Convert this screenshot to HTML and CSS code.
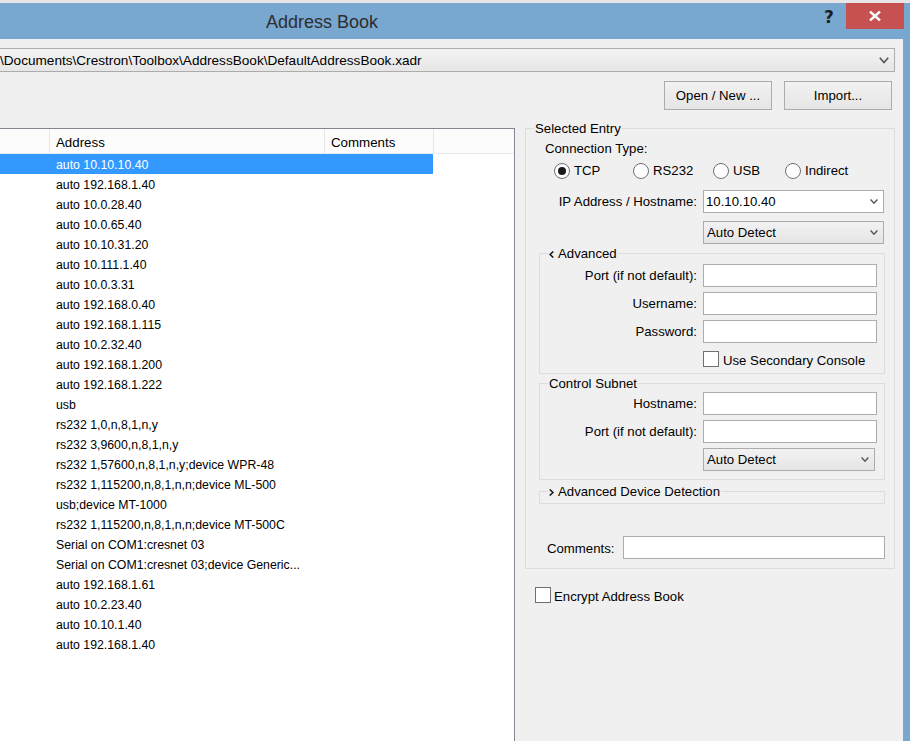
FILE: index.html
```html
<!DOCTYPE html>
<html>
<head>
<meta charset="utf-8">
<title>Address Book</title>
<link rel="stylesheet" href="styles.css">
</head>
<body>
<div class="strip"></div>
<div class="titlebar">
  <div class="title">Address Book</div>
  <div class="spacer"></div>
  <div class="help">?</div>
  <div class="close"><svg width="12" height="10" viewBox="0 0 12 10"><path d="M1 0.5 L11 9.5 M11 0.5 L1 9.5" stroke="#fff" stroke-width="2.4" fill="none"/></svg></div>
</div>
<div class="window">
  <div class="content">
    <div class="pathcombo">
      <span>\Documents\Crestron\Toolbox\AddressBook\DefaultAddressBook.xadr</span>
      <svg class="chev-big" width="10" height="7" viewBox="0 0 10 7"><path d="M0.8 0.8 L5 5.6 L9.2 0.8" fill="none" stroke="#555" stroke-width="1.6"/></svg>
    </div>
    <div class="buttons">
      <button class="btn">Open / New ...</button>
      <button class="btn">Import...</button>
    </div>
    <div class="main">
      <div class="list">
        <div class="lhead">
          <div class="hc c1"></div>
          <div class="hc c2">Address</div>
          <div class="hc c3">Comments</div>
        </div>
        <div class="row sel">auto 10.10.10.40</div>
        <div class="row">auto 192.168.1.40</div>
        <div class="row">auto 10.0.28.40</div>
        <div class="row">auto 10.0.65.40</div>
        <div class="row">auto 10.10.31.20</div>
        <div class="row">auto 10.111.1.40</div>
        <div class="row">auto 10.0.3.31</div>
        <div class="row">auto 192.168.0.40</div>
        <div class="row">auto 192.168.1.115</div>
        <div class="row">auto 10.2.32.40</div>
        <div class="row">auto 192.168.1.200</div>
        <div class="row">auto 192.168.1.222</div>
        <div class="row">usb</div>
        <div class="row">rs232 1,0,n,8,1,n,y</div>
        <div class="row">rs232 3,9600,n,8,1,n,y</div>
        <div class="row">rs232 1,57600,n,8,1,n,y;device WPR-48</div>
        <div class="row">rs232 1,115200,n,8,1,n,n;device ML-500</div>
        <div class="row">usb;device MT-1000</div>
        <div class="row">rs232 1,115200,n,8,1,n,n;device MT-500C</div>
        <div class="row">Serial on COM1:cresnet 03</div>
        <div class="row">Serial on COM1:cresnet 03;device Generic...</div>
        <div class="row">auto 192.168.1.61</div>
        <div class="row">auto 10.2.23.40</div>
        <div class="row">auto 10.10.1.40</div>
        <div class="row">auto 192.168.1.40</div>
      </div>
      <div class="side">
        <fieldset class="group entry">
          <legend>Selected Entry</legend>
          <div class="ctype">Connection Type:</div>
          <div class="radios">
            <div class="radio r1"><span class="rb on"></span>TCP</div>
            <div class="radio r2"><span class="rb"></span>RS232</div>
            <div class="radio r3"><span class="rb"></span>USB</div>
            <div class="radio r4"><span class="rb"></span>Indirect</div>
          </div>
          <div class="frow ip">
            <div class="lbl lbl-entry">IP Address / Hostname:</div>
            <div class="cb white w181"><span>10.10.10.40</span><svg width="8" height="5" viewBox="0 0 8 5"><path d="M0.6 0.6 L4 4.2 L7.4 0.6" fill="none" stroke="#555" stroke-width="1.4"/></svg></div>
          </div>
          <div class="cb w181 auto1"><span>Auto Detect</span><svg width="8" height="5" viewBox="0 0 8 5"><path d="M0.6 0.6 L4 4.2 L7.4 0.6" fill="none" stroke="#555" stroke-width="1.4"/></svg></div>

          <fieldset class="group sub adv">
            <legend><svg class="lchev" width="5" height="7" viewBox="0 0 5 7"><path d="M4.3 0.5 L1 3.5 L4.3 6.5" fill="none" stroke="#111" stroke-width="1.5"/></svg>Advanced</legend>
            <div class="frow first2">
              <div class="lbl lbl-sub">Port (if not default):</div>
              <div class="tb w174"></div>
            </div>
            <div class="frow gap5">
              <div class="lbl lbl-sub">Username:</div>
              <div class="tb w174"></div>
            </div>
            <div class="frow gap5">
              <div class="lbl lbl-sub">Password:</div>
              <div class="tb w174"></div>
            </div>
            <div class="check sec"><span class="cbox"></span><span class="ct">Use Secondary Console</span></div>
          </fieldset>

          <fieldset class="group sub csub">
            <legend>Control Subnet</legend>
            <div class="frow">
              <div class="lbl lbl-sub">Hostname:</div>
              <div class="tb w174"></div>
            </div>
            <div class="frow gap5">
              <div class="lbl lbl-sub">Port (if not default):</div>
              <div class="tb w174"></div>
            </div>
            <div class="cb w172 auto2"><span>Auto Detect</span><svg width="8" height="5" viewBox="0 0 8 5"><path d="M0.6 0.6 L4 4.2 L7.4 0.6" fill="none" stroke="#555" stroke-width="1.4"/></svg></div>
          </fieldset>

          <fieldset class="group sub add">
            <legend><svg class="lchev" width="5" height="7" viewBox="0 0 5 7"><path d="M0.7 0.5 L4 3.5 L0.7 6.5" fill="none" stroke="#111" stroke-width="1.5"/></svg>Advanced Device Detection</legend>
            <div class="add-pad"></div>
          </fieldset>

          <div class="comments">
            <div class="clbl">Comments:</div>
            <div class="tb cfield"></div>
          </div>
        </fieldset>
        <div class="check encrypt"><span class="cbox"></span><span class="ct">Encrypt Address Book</span></div>
      </div>
    </div>
  </div>
  <div class="frame"></div>
</div>
</body>
</html>
```

FILE: styles.css
```css
html, body {
  margin: 0;
  padding: 0;
}
body {
  width: 910px;
  height: 741px;
  overflow: hidden;
  background: #78A7CF;
  font-family: "Liberation Sans", Arial, sans-serif;
  color: #000;
}

.strip {
  height: 3px;
  background: #E6E6E6;
}

.titlebar {
  height: 36px;
  display: flex;
  align-items: flex-start;
  background: #78A7CF;
}
.title {
  margin-left: 266px;
  padding-top: 1px;
  line-height: 36px;
  font-size: 18px;
  color: #2E2E2E;
}
.spacer { flex: 1; }
.help {
  margin-top: 4px;
  margin-right: 11px;
  width: 11px;
  font-family: "DejaVu Sans", sans-serif;
  font-weight: bold;
  font-size: 17px;
  line-height: 20px;
  color: #1E1E1E;
}
.close {
  width: 58px;
  height: 26px;
  margin-right: 6px;
  background: #C75050;
  display: flex;
  align-items: center;
  justify-content: center;
}

.window {
  display: flex;
  height: 702px;
}
.content {
  width: 903px;
  background: #F0F0F0;
  display: flex;
  flex-direction: column;
}
.frame {
  flex: 1;
  background: #78A7CF;
}

.pathcombo {
  margin: 9px 8px 0 -4px;
  height: 24px;
  box-sizing: border-box;
  border: 1px solid #ACACAC;
  background: linear-gradient(#F3F3F3, #E6E6E6);
  display: flex;
  align-items: center;
  justify-content: space-between;
  padding: 0 5px 0 3px;
  font-size: 13.6px;
}

.buttons {
  display: flex;
  justify-content: flex-end;
  gap: 12px;
  margin: 9px 11px 0 0;
}
.btn {
  width: 108px;
  height: 29px;
  box-sizing: border-box;
  border: 1px solid #ACACAC;
  background: linear-gradient(#F2F2F2, #E5E5E5);
  font-family: "Liberation Sans", Arial, sans-serif;
  font-size: 13.2px;
  color: #000;
  padding: 0;
  margin: 0;
}

.main {
  display: flex;
  flex: 1;
  min-height: 0;
  margin-top: 10px;
}

.list {
  width: 515px;
  box-sizing: border-box;
  margin-top: 8px;
  border-top: 1px solid #828790;
  border-right: 1px solid #828790;
  background: #fff;
}
.lhead {
  display: flex;
  height: 24px;
  border-bottom: 1px solid #E5EBF2;
  background: #FCFCFC;
}
.hc {
  box-sizing: border-box;
  border-right: 1px solid #E5E5E5;
  padding: 2px 0 0 6px;
  font-size: 13.3px;
  line-height: 23px;
}
.c1 { width: 50px; }
.c2 { width: 275px; }
.c3 { width: 109px; }
.row {
  width: 433px;
  box-sizing: border-box;
  height: 20px;
  line-height: 22px;
  padding-left: 56px;
  font-size: 12.3px;
  white-space: nowrap;
  overflow: hidden;
}
.row.sel {
  background: #3399FF;
  color: #fff;
}

.side {
  margin-left: 10px;
  width: 370px;
  font-size: 13.2px;
}
fieldset.group {
  margin: 0;
  padding: 0;
  border: 1px solid #DCDCDC;
  min-width: 0;
}
fieldset.group > legend {
  padding: 1px 1px 0;
  margin-left: 8px;
  line-height: 16px;
  font-size: 13.2px;
}
.lchev {
  margin-right: 4px;
  vertical-align: 0;
}
.entry {
  padding-bottom: 9px !important;
}
.ctype {
  margin: 4px 0 0 19px;
  line-height: 16px;
}
.radios {
  display: flex;
  height: 16px;
  margin: 6px 0 0 28px;
}
.radio {
  display: flex;
  align-items: center;
  gap: 4px;
  line-height: 18px;
}
.r1 { width: 79px; }
.r2 { width: 80px; }
.r3 { width: 72px; }
.rb {
  width: 16px;
  height: 16px;
  box-sizing: border-box;
  border: 1px solid #707070;
  border-radius: 50%;
  background: #fff;
  display: flex;
  align-items: center;
  justify-content: center;
}
.rb.on::after {
  content: "";
  width: 8px;
  height: 8px;
  border-radius: 50%;
  background: #1A1A1A;
}

.frow {
  display: flex;
  align-items: center;
  height: 23px;
}
.ip { margin-top: 11px; }
.lbl {
  box-sizing: border-box;
  text-align: right;
  padding-right: 6px;
  white-space: nowrap;
}
.lbl-entry { width: 177px; }
.lbl-sub { width: 163px; }
.first2 { margin-top: 2px; }
.gap5 { margin-top: 5px; }

.tb {
  height: 23px;
  box-sizing: border-box;
  border: 1px solid #ABADB3;
  background: #fff;
}
.w174 { width: 174px; }
.cb {
  height: 23px;
  box-sizing: border-box;
  border: 1px solid #ACACAC;
  background: linear-gradient(#F2F2F2, #E5E5E5);
  display: flex;
  align-items: center;
  justify-content: space-between;
  padding: 0 5px 0 3px;
}
.cb.white {
  background: #fff;
  padding-left: 2px;
}
.w181 { width: 181px; }
.w172 { width: 172px; }
.auto1 {
  margin: 8px 0 0 177px;
}
.auto2 {
  margin: 5px 0 0 163px;
}

fieldset.sub {
  margin: 1px 9px 0 13px;
}
.adv { padding-bottom: 4px !important; }
.csub { padding-bottom: 8px !important; }
fieldset.add { margin-top: 3px; }
.add-pad { height: 3px; }

.check {
  display: flex;
  align-items: flex-start;
  line-height: 16px;
  white-space: nowrap;
}
.check .ct {
  padding-top: 2px;
}
.cbox {
  width: 16px;
  height: 16px;
  box-sizing: border-box;
  border: 1px solid #707070;
  background: #fff;
}
.sec {
  margin: 8px 0 0 163px;
  gap: 4px;
}

.comments {
  display: flex;
  align-items: center;
  margin: 32px 9px 0 21px;
}
.clbl { width: 76px; padding-top: 1px; }
.cfield { flex: 1; }

.encrypt {
  margin: 18px 0 0 10px;
  gap: 3px;
}
```
